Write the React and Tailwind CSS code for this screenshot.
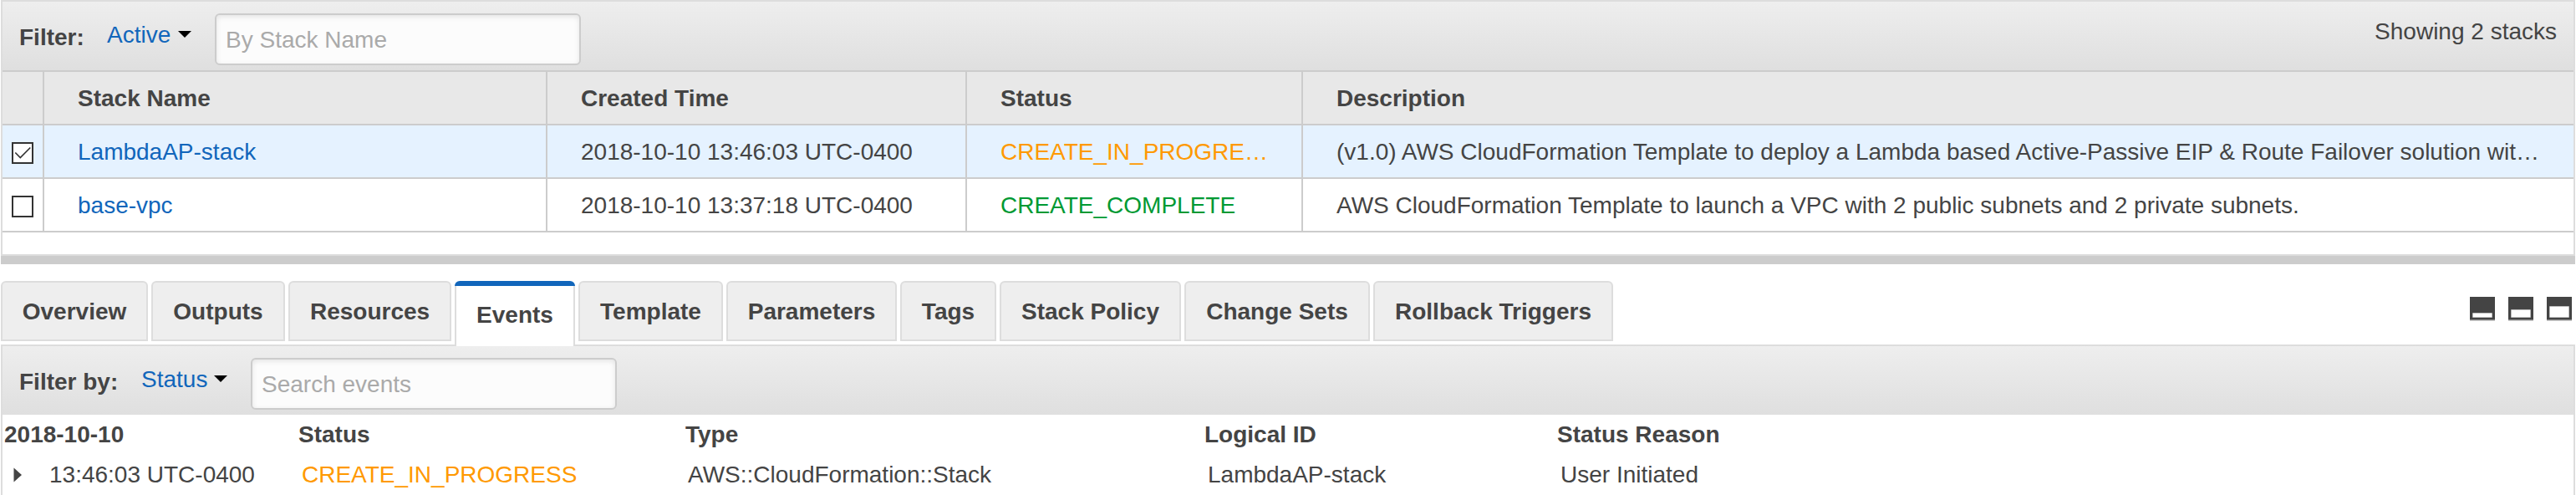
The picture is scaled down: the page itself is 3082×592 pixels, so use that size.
const TABS = [
  ["Overview", "w-[176px]"],
  ["Outputs", "w-[160px]"],
  ["Resources", "w-[195px]"],
  ["Events", "w-[144px]"],
  ["Template", "w-[173px]"],
  ["Parameters", "w-[204px]"],
  ["Tags", "w-[115px]"],
  ["Stack Policy", "w-[217px]"],
  ["Change Sets", "w-[222px]"],
  ["Rollback Triggers", "w-[287px]"],
];

const STACKS = [
  {
    checked: true,
    name: "LambdaAP-stack",
    created: "2018-10-10 13:46:03 UTC-0400",
    status: "CREATE_IN_PROGRE…",
    color: "text-[#ff9900]",
    description:
      "(v1.0) AWS CloudFormation Template to deploy a Lambda based Active-Passive EIP & Route Failover solution wit…",
  },
  {
    checked: false,
    name: "base-vpc",
    created: "2018-10-10 13:37:18 UTC-0400",
    status: "CREATE_COMPLETE",
    color: "text-[#009933]",
    description:
      "AWS CloudFormation Template to launch a VPC with 2 public subnets and 2 private subnets.",
  },
];

const COLUMNS = "grid grid-cols-[50px_602px_502px_402px_1520px] border-b-2 border-[#ccc]";
const CELL = "flex h-[62px] items-center border-r-2 border-[#ccc] pt-[2px] pl-[40px]";
const LAST = "flex h-[62px] items-center pt-[2px] pl-[40px]";

function Caret({ className }) {
  return (
    <svg className={className} width="16" height="8" viewBox="0 0 16 8">
      <path d="M0 0H16L8 8Z" fill="#000" />
    </svg>
  );
}

function Field({ placeholder, className }) {
  return (
    <input
      placeholder={placeholder}
      className={`${className} mt-[14px] h-[62px] w-[438px] rounded-[6px] border-2 border-[#ccc] bg-[#fcfcfc] px-[11px] pt-[2px] shadow-[inset_0_2px_6px_rgba(0,0,0,0.1)] placeholder:text-[#aaa]`}
    />
  );
}

function Checkbox({ checked }) {
  return (
    <svg width="26" height="26" viewBox="0 0 26 26">
      <rect x="1" y="1" width="24" height="24" fill="#fff" stroke="#333" strokeWidth="2" />
      {checked && <path d="M4.3 12.5L10.3 18.5L22.3 6.5" fill="none" stroke="#333" strokeWidth="1.7" />}
    </svg>
  );
}

function SplitIcon({ top }) {
  return (
    <svg width="30" height="29" viewBox="0 0 30 29">
      <rect width="30" height="27" fill="#444" />
      <rect y="27" width="30" height="1" fill="#888" />
      <rect y="28" width="30" height="1" fill="#ccc" />
      <rect x="3.5" y={top} width="23" height={24.5 - top} fill="#fff" stroke="#fff" strokeOpacity="0.3" />
    </svg>
  );
}

export default function App() {
  return (
    <div className="h-[592px] w-[3082px] overflow-hidden bg-white pr-px pl-px font-['Liberation_Sans',Arial,sans-serif] text-[28px] leading-[32px] whitespace-nowrap text-[#444]">
      <section className="h-[306px] border-2 border-[#ddd]">
        <div className="flex h-[84px] items-start border-b-2 border-[#ccc] bg-linear-to-b from-[#eee] to-[#dfdfdf]">
          <span className="mt-[27px] ml-[20px] w-[105px] font-bold">Filter:</span>
          <span className="mt-[24px] w-[85px] text-[#1166bb]">Active</span>
          <Caret className="mt-[35px]" />
          <Field placeholder="By Stack Name" className="ml-[28px]" />
          <span className="mt-[20px] mr-[20px] ml-auto">Showing 2 stacks</span>
        </div>
        <div className={`${COLUMNS} bg-[#e8e8e8] font-bold`}>
          <div className="border-r-2 border-[#ccc]" />
          <div className={CELL}>Stack Name</div>
          <div className={CELL}>Created Time</div>
          <div className={CELL}>Status</div>
          <div className={LAST}>Description</div>
        </div>
        {STACKS.map((s) => (
          <div key={s.name} className={`${COLUMNS} ${s.checked ? "bg-[#e5f2ff]" : "bg-white"}`}>
            <div className="flex items-center border-r-2 border-[#ccc] pt-[4px] pl-[11px]">
              <Checkbox checked={s.checked} />
            </div>
            <div className={`${CELL} text-[#1166bb]`}>{s.name}</div>
            <div className={CELL}>{s.created}</div>
            <div className={`${CELL} ${s.color}`}>{s.status}</div>
            <div className={LAST}>{s.description}</div>
          </div>
        ))}
      </section>
      <div className="h-[10px] bg-[#ccc]" />

      <div className="relative z-10 -mb-[2px] flex h-[98px] items-start pt-[20px]">
        <nav className="flex gap-[4px] font-bold">
          {TABS.map(([label, width]) =>
            label === "Events" ? (
              <div
                key={label}
                className={`${width} h-[78px] overflow-hidden rounded-t-[6px] bg-white`}
              >
                <div className="h-[6px] bg-[#1166bb]" />
                <div className="flex h-[72px] justify-center border-x-2 border-[#ddd] pt-[19px]">{label}</div>
              </div>
            ) : (
              <div
                key={label}
                className={`${width} flex h-[72px] justify-center rounded-t-[6px] border-2 border-[#ddd] bg-[#eee] pt-[19px]`}
              >
                {label}
              </div>
            ),
          )}
        </nav>
        <div className="mt-[19px] mr-[4px] ml-auto flex gap-[16px]">
          <SplitIcon top={19.5} />
          <SplitIcon top={15.5} />
          <SplitIcon top={11.5} />
        </div>
      </div>

      <section className="h-[182px] border-2 border-[#ddd]">
        <div className="flex h-[82px] items-start bg-linear-to-b from-[#eee] to-[#dfdfdf]">
          <span className="mt-[27px] ml-[20px] w-[146px] font-bold">Filter by:</span>
          <span className="mt-[24px] w-[87px] text-[#1166bb]">Status</span>
          <Caret className="mt-[35px]" />
          <Field placeholder="Search events" className="ml-[28px]" />
        </div>
        <div className="grid grid-cols-[352px_463px_621px_422px_auto] pt-[8px] pl-[2px] font-bold">
          <div>2018-10-10</div>
          <div>Status</div>
          <div>Type</div>
          <div>Logical ID</div>
          <div>Status Reason</div>
        </div>
        <div className="grid grid-cols-[356px_462px_622px_422px_auto] pt-[16px] pl-[2px]">
          <div className="flex items-center pl-[11px]">
            <svg width="10" height="18" viewBox="0 0 10 18">
              <path d="M0.5 0.5L10 9L0.5 17.5Z" fill="#444" />
            </svg>
            <span className="pl-[33px]">13:46:03 UTC-0400</span>
          </div>
          <div className="text-[#ff9900]">CREATE_IN_PROGRESS</div>
          <div>AWS::CloudFormation::Stack</div>
          <div>LambdaAP-stack</div>
          <div>User Initiated</div>
        </div>
      </section>
    </div>
  );
}
